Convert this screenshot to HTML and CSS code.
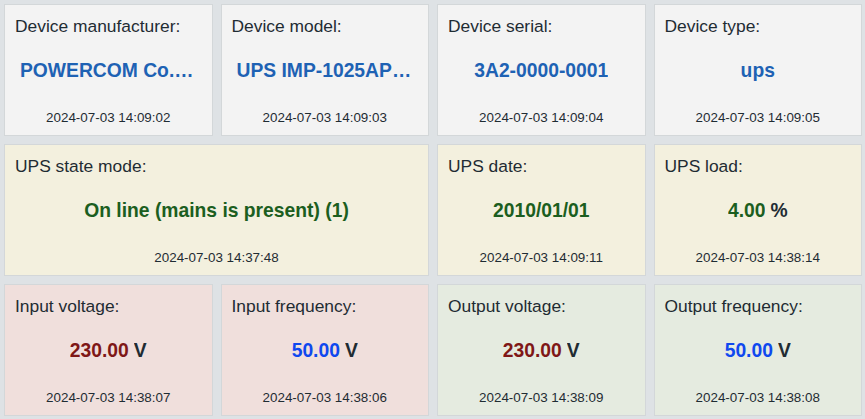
FILE: index.html
```html
<!DOCTYPE html>
<html>
<head>
<meta charset="utf-8">
<link rel="stylesheet" href="styles.css">
</head>
<body>
<div class="grid">
  <div class="card grey">
    <div class="label">Device manufacturer:</div>
    <div class="value"><span class="v-blue">POWERCOM Co., LTD.</span></div>
    <div class="time">2024-07-03 14:09:02</div>
  </div>
  <div class="card grey">
    <div class="label">Device model:</div>
    <div class="value"><span class="v-blue">UPS IMP-1025AP-CN</span></div>
    <div class="time">2024-07-03 14:09:03</div>
  </div>
  <div class="card grey">
    <div class="label">Device serial:</div>
    <div class="value"><span class="v-blue">3A2-0000-0001</span></div>
    <div class="time">2024-07-03 14:09:04</div>
  </div>
  <div class="card grey">
    <div class="label">Device type:</div>
    <div class="value"><span class="v-blue">ups</span></div>
    <div class="time">2024-07-03 14:09:05</div>
  </div>

  <div class="card yellow span2">
    <div class="label">UPS state mode:</div>
    <div class="value"><span class="v-green">On line (mains is present) (1)</span></div>
    <div class="time">2024-07-03 14:37:48</div>
  </div>
  <div class="card yellow">
    <div class="label">UPS date:</div>
    <div class="value"><span class="v-green">2010/01/01</span></div>
    <div class="time">2024-07-03 14:09:11</div>
  </div>
  <div class="card yellow">
    <div class="label">UPS load:</div>
    <div class="value"><span class="v-green">4.00</span> <span class="unit">%</span></div>
    <div class="time">2024-07-03 14:38:14</div>
  </div>

  <div class="card pink">
    <div class="label">Input voltage:</div>
    <div class="value"><span class="v-red">230.00</span> <span class="unit">V</span></div>
    <div class="time">2024-07-03 14:38:07</div>
  </div>
  <div class="card pink">
    <div class="label">Input frequency:</div>
    <div class="value"><span class="v-freq">50.00</span> <span class="unit">V</span></div>
    <div class="time">2024-07-03 14:38:06</div>
  </div>
  <div class="card green">
    <div class="label">Output voltage:</div>
    <div class="value"><span class="v-red">230.00</span> <span class="unit">V</span></div>
    <div class="time">2024-07-03 14:38:09</div>
  </div>
  <div class="card green">
    <div class="label">Output frequency:</div>
    <div class="value"><span class="v-freq">50.00</span> <span class="unit">V</span></div>
    <div class="time">2024-07-03 14:38:08</div>
  </div>
</div>
</body>
</html>
```
FILE: styles.css
```css
html, body {
  margin: 0;
  padding: 0;
  background: #dee2e5;
  font-family: "Liberation Sans", Arial, sans-serif;
  color: #1f2c33;
}
.grid {
  display: grid;
  grid-template-columns: repeat(4, 1fr);
  grid-auto-rows: 132px;
  gap: 8px;
  padding: 4px 3px 3px 4px;
}
.card {
  border: 1px solid #d3d7d9;
  padding: 10px 10px 9px 10px;
  display: flex;
  flex-direction: column;
  min-width: 0;
  box-sizing: border-box;
}
.span2 { grid-column: span 2; }
.grey { background: #f3f3f3; }
.yellow { background: #f3f0de; }
.pink { background: #f0dfdc; }
.green { background: #e5ebe0; }
.label {
  font-size: 17.4px;
  line-height: 22px;
}
.value {
  flex: 1;
  display: flex;
  align-items: center;
  justify-content: center;
  font-size: 19.3px;
  font-weight: bold;
  padding: 0 5px 5px;
  min-width: 0;
  white-space: nowrap;
}
.value span {
  overflow: hidden;
  text-overflow: ellipsis;
  white-space: pre;
}
.value .unit { margin-left: 5px; }
.v-blue { color: #1e62b4; }
.v-green { color: #1b5e20; }
.v-red { color: #7f1717; }
.v-freq { color: #0f48ef; }
.unit { color: #1f2c33; }
.time {
  font-size: 13.4px;
  line-height: 16px;
  text-align: center;
}
```
